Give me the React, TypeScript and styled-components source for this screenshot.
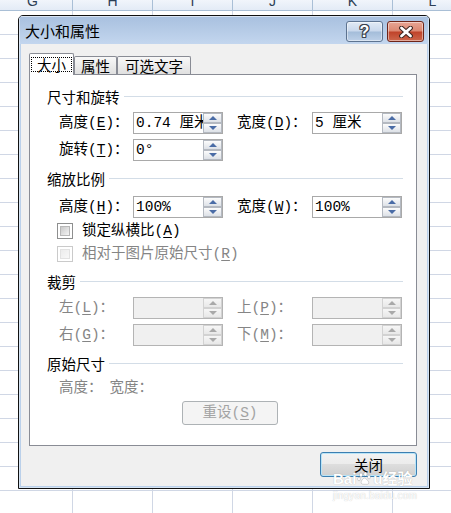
import React from "react";
import styled, { createGlobalStyle } from "styled-components";

const CJK = `"Noto Sans CJK SC", "Liberation Sans", sans-serif`;
const MIXED = `"Liberation Mono", "Noto Sans CJK SC", monospace`;

const GlobalStyle = createGlobalStyle`
  html, body { margin: 0; padding: 0; background: #fff; }
  body { width: 451px; height: 513px; overflow: hidden; }
  #root { width: 451px; height: 513px; }
`;

const Sheet = styled.div`
  position: relative;
  width: 451px;
  height: 513px;
  overflow: hidden;
  display: flex;
  flex-direction: column;
  background: #fff;
`;

const ColumnHeader = styled.div`
  flex-shrink: 0;
  display: flex;
  height: 11px;
  box-sizing: border-box;
  margin-left: -7px;
  border-bottom: 1px solid #a9bfd6;
  background: linear-gradient(#f1f5fb, #e3ebf6);
  overflow: hidden;
`;

const HeaderCell = styled.div`
  flex: 0 0 80px;
  height: 10px;
  box-sizing: border-box;
  border-right: 1px solid #a9bfd6;
  display: flex;
  align-items: flex-end;
  justify-content: center;
  overflow: hidden;
  font: 14px/14px "Liberation Sans", sans-serif;
  color: #2c3e55;
  span {
    display: block;
    margin-bottom: 2px;
  }
`;

const Grid = styled.div`
  flex: 1;
  background-image: linear-gradient(to right, transparent 79px, #d0d7e5 79px),
    linear-gradient(to bottom, transparent 23px, #d0d7e5 23px);
  background-size: 80px 100%, 100% 24px;
  background-position: -7px 0, 0 0;
`;

const Dialog = styled.div`
  position: absolute;
  left: 18px;
  top: 15px;
  width: 412px;
  height: 474px;
  box-sizing: border-box;
  border: 1px solid #111;
  border-radius: 5px 5px 0 0;
  display: flex;
  flex-direction: column;
  overflow: hidden;
  background: #bad0ea;
  font-family: ${CJK};
`;

const TitleBar = styled.div`
  flex-shrink: 0;
  height: 28px;
  display: flex;
  align-items: center;
  padding: 0 5px 0 6px;
  background: linear-gradient(#a8c0df, #c3d6ee);
  box-shadow: inset 0 1px 0 rgba(255, 255, 255, 0.55),
    inset 1px 0 0 rgba(255, 255, 255, 0.45),
    inset -1px 0 0 rgba(255, 255, 255, 0.45);
`;

const Title = styled.div`
  flex: 1;
  font-size: 15px;
  line-height: 18px;
  color: #000;
  margin-top: 1px;
`;

const CaptionButtons = styled.div`
  display: flex;
  gap: 4px;
  align-self: flex-start;
  margin-top: 5px;
`;

const CaptionButton = styled.div<{ $close?: boolean }>`
  width: 37px;
  height: 21px;
  box-sizing: border-box;
  border-radius: 3px;
  border: 1px solid ${(p) => (p.$close ? "#6e2418" : "#5d7390")};
  background: ${(p) =>
    p.$close
      ? "linear-gradient(#e8a594 0%, #dc8872 47%, #c0432a 53%, #cd674c 100%)"
      : "linear-gradient(#e1eaf5 0%, #c9d8ec 47%, #a4bdda 53%, #bdd0e8 100%)"};
  box-shadow: inset 0 0 0 1px rgba(255, 255, 255, 0.45);
  display: flex;
  align-items: center;
  justify-content: center;
`;

const HelpGlyph = styled.span`
  font: bold 16px/16px "Liberation Sans", sans-serif;
  color: #fff;
  text-shadow: 1px 0 #39414d, -1px 0 #39414d, 0 1px #39414d, 0 -1px #39414d,
    1px 1px #39414d, -1px -1px #39414d, 1px -1px #39414d, -1px 1px #39414d;
`;

const Frame = styled.div`
  flex: 1;
  display: flex;
  padding: 0 2px 2px;
  box-shadow: inset 1px 0 0 #d6e4f3, inset -1px 0 0 #d6e4f3, inset 0 -1px 0 #d6e4f3;
`;

const Body = styled.div`
  flex: 1;
  background: #f0f0f0;
  padding: 9px 10px 0 8px;
  display: flex;
  flex-direction: column;
`;

const TabStrip = styled.div`
  position: relative;
  z-index: 1;
  display: flex;
  align-items: flex-start;
  height: 22px;
  margin-bottom: -1px;
`;

const Tab = styled.div<{ $active?: boolean; $w: number }>`
  width: ${(p) => p.$w}px;
  height: ${(p) => (p.$active ? 22 : 18)}px;
  margin-top: ${(p) => (p.$active ? 0 : 3)}px;
  box-sizing: border-box;
  border: 1px solid #898c95;
  border-bottom: none;
  border-radius: 2px 2px 0 0;
  background: ${(p) => (p.$active ? "#fff" : "linear-gradient(#f8f8f8, #e0e0e0)")};
  display: flex;
  align-items: center;
  justify-content: center;
  font-size: 14.5px;
  line-height: 16px;
  color: #000;
`;

const FocusLabel = styled.span`
  display: inline-block;
  border: 1px dotted #000;
  padding: 0 5px;
  line-height: 13px;
`;

const Panel = styled.div`
  height: 372px;
  box-sizing: border-box;
  border: 1px solid #898c95;
  background: #fff;
  display: flex;
  flex-direction: column;
  padding: 13px 13px 0 17px;
`;

const SectionHeader = styled.div<{ $mt: number }>`
  display: flex;
  align-items: center;
  gap: 4px;
  height: 18px;
  margin-top: ${(p) => p.$mt}px;
  font-size: 14.5px;
  line-height: 18px;
  color: #000;
  white-space: nowrap;
  &::after {
    content: "";
    flex: 1;
    height: 1px;
    margin-top: -1px;
    background: #d3dde7;
  }
`;

const FieldRow = styled.div<{ $mt: number }>`
  display: grid;
  grid-template-columns: 74px 90px 14px 75px 90px;
  align-items: center;
  height: 22px;
  margin-left: 12px;
  margin-top: ${(p) => p.$mt}px;
`;

const Label = styled.span<{ $disabled?: boolean }>`
  font-family: ${MIXED};
  font-size: 14.5px;
  line-height: 18px;
  white-space: nowrap;
  color: ${(p) => (p.$disabled ? "#858585" : "#000")};
  u {
    text-underline-offset: 2px;
  }
`;

const SpinBox = styled.div<{ $disabled?: boolean }>`
  width: 90px;
  height: 22px;
  box-sizing: border-box;
  border: 1px solid ${(p) => (p.$disabled ? "#b4b4b4" : "#a9a9a9")};
  background: ${(p) => (p.$disabled ? "#f0f0f0" : "#fff")};
  display: flex;
`;

const SpinValue = styled.div`
  flex: 1;
  min-width: 0;
  overflow: hidden;
  white-space: nowrap;
  padding-left: 2px;
  font-family: ${MIXED};
  font-size: 14.5px;
  line-height: 20px;
  color: #000;
`;

const Spinner = styled.div`
  width: 19px;
  display: flex;
  flex-direction: column;
`;

const SpinButton = styled.div<{ $disabled?: boolean; $down?: boolean }>`
  flex: 1;
  box-sizing: border-box;
  border: 1px solid ${(p) => (p.$disabled ? "#d2d2d2" : "#b4b9c1")};
  background: ${(p) =>
    p.$disabled ? "linear-gradient(#f6f6f6, #e8e8e8)" : "linear-gradient(#fcfcfc, #dde1e7)"};
  display: flex;
  align-items: center;
  justify-content: center;
  &::before {
    content: "";
    border-left: 4px solid transparent;
    border-right: 4px solid transparent;
    ${(p) => (p.$down ? "border-top" : "border-bottom")}: 4px solid
      ${(p) => (p.$disabled ? "#a9a9a9" : "#4a6ca6")};
  }
`;

const CheckRow = styled.div<{ $mt: number }>`
  display: flex;
  align-items: center;
  gap: 9px;
  height: 18px;
  margin-left: 10px;
  margin-top: ${(p) => p.$mt}px;
`;

const CheckBox = styled.span<{ $disabled?: boolean }>`
  width: 16px;
  height: 16px;
  box-sizing: border-box;
  border: 1px solid ${(p) => (p.$disabled ? "#cacaca" : "#8e8f8f")};
  background: #fff;
  padding: 2px;
  display: flex;
  &::after {
    content: "";
    flex: 1;
    box-sizing: border-box;
    border: 1px solid ${(p) => (p.$disabled ? "#e2e2e2" : "#b8b8b8")};
    background: ${(p) =>
      p.$disabled
        ? "linear-gradient(135deg, #ececec, #f8f8f8)"
        : "linear-gradient(135deg, #c9c9c9, #f4f4f4)"};
  }
`;

const SizeInfo = styled.div<{ $mt: number }>`
  display: flex;
  gap: 7px;
  height: 18px;
  margin-left: 12px;
  margin-top: ${(p) => p.$mt}px;
`;

const ResetButton = styled.div`
  align-self: flex-start;
  width: 96px;
  height: 24px;
  margin: 4px 0 0 135px;
  box-sizing: border-box;
  border: 1px solid #adb2b5;
  border-radius: 3px;
  background: #f4f4f4;
  display: flex;
  align-items: center;
  justify-content: center;
  font-family: ${MIXED};
  font-size: 14.5px;
  line-height: 18px;
  color: #a3a3a3;
  u {
    text-underline-offset: 2px;
  }
`;

const Footer = styled.div`
  display: flex;
  justify-content: flex-end;
  margin-top: 6px;
`;

const DefaultButton = styled.div`
  width: 97px;
  height: 25px;
  box-sizing: border-box;
  border: 1px solid #3c7fb1;
  border-radius: 3px;
  background: linear-gradient(#f3f3f3 0%, #ebebeb 50%, #dddddd 50%, #cfcfcf 100%);
  box-shadow: inset 0 0 0 1px #b9e4f7;
  display: flex;
  align-items: center;
  justify-content: center;
  font-size: 14.5px;
  line-height: 18px;
  color: #000;
`;

const Watermark = styled.div`
  position: absolute;
  left: 333px;
  top: 470px;
  display: flex;
  flex-direction: column;
  color: #fff;
  text-shadow: 0 0 1px rgba(0, 0, 0, 0.28);
  pointer-events: none;
`;

const WatermarkBrand = styled.div`
  display: flex;
  align-items: center;
  font: bold 15px/17px "Liberation Sans", "Noto Sans CJK SC", sans-serif;
  svg {
    margin: 0 1px;
  }
`;

const WatermarkUrl = styled.div`
  font: 10px/12px "Liberation Sans", sans-serif;
  margin-top: 3px;
  letter-spacing: 0.2px;
`;

type SpinProps = { value?: string; disabled?: boolean };

const Spin: React.FC<SpinProps> = ({ value = "", disabled }) => (
  <SpinBox $disabled={disabled}>
    <SpinValue>{value}</SpinValue>
    <Spinner>
      <SpinButton $disabled={disabled} />
      <SpinButton $disabled={disabled} $down />
    </Spinner>
  </SpinBox>
);

const Key: React.FC<{ name: string; k: string; disabled?: boolean }> = ({ name, k, disabled }) => (
  <Label $disabled={disabled}>
    {name}(<u>{k}</u>)：
  </Label>
);

const columns = ["G", "H", "I", "J", "K", "L"];

export default function App() {
  return (
    <>
      <GlobalStyle />
      <Sheet>
        <ColumnHeader>
          {columns.map((c) => (
            <HeaderCell key={c}>
              <span>{c}</span>
            </HeaderCell>
          ))}
        </ColumnHeader>
        <Grid />

        <Dialog>
          <TitleBar>
            <Title>大小和属性</Title>
            <CaptionButtons>
              <CaptionButton>
                <HelpGlyph>?</HelpGlyph>
              </CaptionButton>
              <CaptionButton $close>
                <svg width="16" height="12" viewBox="0 0 16 12">
                  <path d="M3.5 2 L12.5 10 M12.5 2 L3.5 10" stroke="#3d2520" strokeWidth="4.8" strokeLinecap="round" />
                  <path d="M3.5 2 L12.5 10 M12.5 2 L3.5 10" stroke="#fff" strokeWidth="2.8" strokeLinecap="round" />
                </svg>
              </CaptionButton>
            </CaptionButtons>
          </TitleBar>

          <Frame>
            <Body>
              <TabStrip>
                <Tab $active $w={45}>
                  <FocusLabel>大小</FocusLabel>
                </Tab>
                <Tab $w={43}>属性</Tab>
                <Tab $w={74}>可选文字</Tab>
              </TabStrip>

              <Panel>
                <SectionHeader $mt={0}>尺寸和旋转</SectionHeader>
                <FieldRow $mt={6}>
                  <Key name="高度" k="E" />
                  <Spin value="0.74 厘米" />
                  <span />
                  <Key name="宽度" k="D" />
                  <Spin value="5 厘米" />
                </FieldRow>
                <FieldRow $mt={5}>
                  <Key name="旋转" k="T" />
                  <Spin value="0°" />
                </FieldRow>

                <SectionHeader $mt={9}>缩放比例</SectionHeader>
                <FieldRow $mt={8}>
                  <Key name="高度" k="H" />
                  <Spin value="100%" />
                  <span />
                  <Key name="宽度" k="W" />
                  <Spin value="100%" />
                </FieldRow>
                <CheckRow $mt={4}>
                  <CheckBox />
                  <Label>
                    锁定纵横比(<u>A</u>)
                  </Label>
                </CheckRow>
                <CheckRow $mt={5}>
                  <CheckBox $disabled />
                  <Label $disabled>
                    相对于图片原始尺寸(<u>R</u>)
                  </Label>
                </CheckRow>

                <SectionHeader $mt={10}>裁剪</SectionHeader>
                <FieldRow $mt={6}>
                  <Key name="左" k="L" disabled />
                  <Spin disabled />
                  <span />
                  <Key name="上" k="P" disabled />
                  <Spin disabled />
                </FieldRow>
                <FieldRow $mt={5}>
                  <Key name="右" k="G" disabled />
                  <Spin disabled />
                  <span />
                  <Key name="下" k="M" disabled />
                  <Spin disabled />
                </FieldRow>

                <SectionHeader $mt={9}>原始尺寸</SectionHeader>
                <SizeInfo $mt={6}>
                  <Label $disabled>高度：</Label>
                  <Label $disabled>宽度：</Label>
                </SizeInfo>
                <ResetButton>
                  重设(<u>S</u>)
                </ResetButton>
              </Panel>

              <Footer>
                <DefaultButton>关闭</DefaultButton>
              </Footer>
            </Body>
          </Frame>
        </Dialog>

        <Watermark>
          <WatermarkBrand>
            Bai
            <svg width="15" height="15" viewBox="0 0 15 15">
              <g fill="#fff" stroke="rgba(0,0,0,0.25)" strokeWidth="0.6">
                <ellipse cx="4" cy="4" rx="1.6" ry="2.1" />
                <ellipse cx="8.4" cy="3" rx="1.6" ry="2.1" />
                <ellipse cx="12" cy="6" rx="1.5" ry="1.9" />
                <ellipse cx="2" cy="8" rx="1.4" ry="1.8" />
                <path d="M7 7 C4.5 9 3.5 11 4.5 12.5 C5.5 13.8 8.5 13 9.8 13.3 C11.6 13.6 12.3 12 11.3 10.4 C10.3 9 9 7 7 7 Z" />
              </g>
            </svg>
            u经验
          </WatermarkBrand>
          <WatermarkUrl>jingyan.baidu.com</WatermarkUrl>
        </Watermark>
      </Sheet>
    </>
  );
}
